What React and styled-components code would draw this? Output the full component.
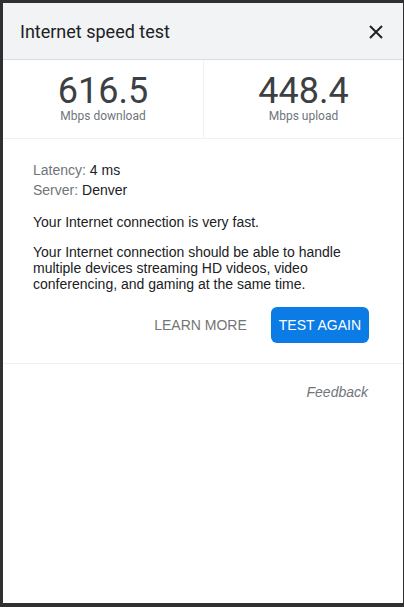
import React from 'react'
import styled, {createGlobalStyle} from 'styled-components'

const GlobalStyle = createGlobalStyle`
    html, body {
        margin: 0;
        padding: 0;
        background: #303030;
    }
    body {
        font-family: "Liberation Sans", Arial, sans-serif;
    }
`

const Page = styled.div`
    padding: 3px;
    min-height: 607px;
    box-sizing: border-box;
`

const Panel = styled.div`
    width: 400px;
    height: 600px;
    background: #fff;
    display: flex;
    flex-direction: column;
`

const Header = styled.div`
    height: 56px;
    background: #f1f3f4;
    border-bottom: 1px solid #dadce0;
    display: flex;
    align-items: center;
    justify-content: space-between;
    padding: 0 20px 0 17px;
`

const Title = styled.h1`
    margin: 0;
    font-family: Roboto, "Liberation Sans", sans-serif;
    font-weight: 400;
    font-size: 18px;
    color: #202124;
`

const CloseButton = styled.button`
    border: 0;
    background: none;
    padding: 0;
    width: 14px;
    height: 14px;
    display: flex;
    cursor: pointer;
    margin-top: 2px;
`

const Stats = styled.div`
    display: grid;
    grid-template-columns: 1fr 1fr;
    height: 78px;
    border-bottom: 1px solid #f1f1f1;
`

const Stat = styled.div`
    display: flex;
    flex-direction: column;
    align-items: center;
    justify-content: center;
    padding-bottom: 2px;
    border-left: ${p => (p.divided ? '1px solid #f1f1f1' : 'none')};
    font-family: Roboto, "Liberation Sans", sans-serif;
`

const Value = styled.div`
    font-size: 36px;
    line-height: 36px;
    color: #3c4043;
`

const Unit = styled.div`
    font-size: 12px;
    line-height: 14px;
    color: #70757a;
`

const Body = styled.div`
    padding: 21px 34px 20px 30px;
    border-bottom: 1px solid #f1f1f1;
    font-size: 14px;
    color: #202124;
`

const InfoLine = styled.div`
    line-height: 20px;
`

const Label = styled.span`
    color: #70757a;
`

const Text = styled.p`
    margin: 14px 0 0;
    line-height: 16px;
`

const Actions = styled.div`
    display: flex;
    justify-content: flex-end;
    align-items: center;
    gap: 24px;
    margin-top: 15px;
`

const TextButton = styled.button`
    border: 0;
    background: none;
    padding: 0;
    font-family: "Liberation Sans", Arial, sans-serif;
    font-size: 14px;
    color: #757575;
    cursor: pointer;
`

const PrimaryButton = styled.button`
    border: 0;
    height: 36px;
    padding: 0 8px;
    border-radius: 6px;
    background: #0b7be6;
    color: #fff;
    font-family: "Liberation Sans", Arial, sans-serif;
    font-size: 14px;
    cursor: pointer;
`

const Footer = styled.div`
    display: flex;
    justify-content: flex-end;
    padding: 20px 35px 0 0;
`

const FeedbackLink = styled.a`
    font-size: 14px;
    line-height: 16px;
    font-style: italic;
    color: #70757a;
    cursor: pointer;
`

const CloseIcon = () => (
    <svg width="14" height="14" viewBox="0 0 14 14">
        <path d="M1 1L13 13M13 1L1 13" stroke="#202124" strokeWidth="2" fill="none"/>
    </svg>
)

export default function App() {
    return (
        <Page>
            <GlobalStyle/>
            <Panel>
                <Header>
                    <Title>Internet speed test</Title>
                    <CloseButton aria-label="Close">
                        <CloseIcon/>
                    </CloseButton>
                </Header>
                <Stats>
                    <Stat>
                        <Value>616.5</Value>
                        <Unit>Mbps download</Unit>
                    </Stat>
                    <Stat divided>
                        <Value>448.4</Value>
                        <Unit>Mbps upload</Unit>
                    </Stat>
                </Stats>
                <Body>
                    <InfoLine><Label>Latency:</Label> 4 ms</InfoLine>
                    <InfoLine><Label>Server:</Label> Denver</InfoLine>
                    <Text>Your Internet connection is very fast.</Text>
                    <Text>
                        Your Internet connection should be able to handle multiple devices
                        streaming HD videos, video conferencing, and gaming at the same time.
                    </Text>
                    <Actions>
                        <TextButton>LEARN MORE</TextButton>
                        <PrimaryButton>TEST AGAIN</PrimaryButton>
                    </Actions>
                </Body>
                <Footer>
                    <FeedbackLink>Feedback</FeedbackLink>
                </Footer>
            </Panel>
        </Page>
    )
}
